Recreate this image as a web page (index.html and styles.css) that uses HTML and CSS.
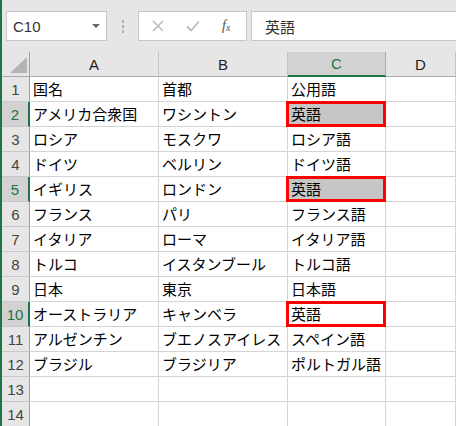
FILE: index.html
```html
<!DOCTYPE html>
<html lang="ja">
<head>
<meta charset="utf-8">
<link rel="stylesheet" href="styles.css">
</head>
<body>
<div class="app">
  <div class="toolbar">
    <div class="namebox"><span class="ref">C10</span><span class="caret"></span></div>
    <div class="grip"><i></i><i></i><i></i></div>
    <div class="fbtns">
      <svg class="ico" width="12" height="12" viewBox="0 0 12 12"><path d="M1 1L11 11M11 1L1 11" stroke="#bcbcbc" stroke-width="1.6" fill="none"/></svg>
      <svg class="ico" width="14" height="12" viewBox="0 0 14 12"><path d="M1 6.5L5 10.5L13 1.5" stroke="#bcbcbc" stroke-width="1.8" fill="none"/></svg>
      <span class="fx">f<sub>x</sub></span>
    </div>
    <div class="finput">英語</div>
  </div>
  <div class="sheet">
    <div class="corner"><span class="tri"></span></div>
    <div class="ch">A</div><div class="ch">B</div><div class="ch sel">C</div><div class="ch">D</div>

    <div class="rh">1</div><div class="c">国名</div><div class="c">首都</div><div class="c">公用語</div><div class="c"></div>
    <div class="rh sel">2</div><div class="c">アメリカ合衆国</div><div class="c">ワシントン</div><div class="c fill mark">英語</div><div class="c"></div>
    <div class="rh">3</div><div class="c">ロシア</div><div class="c">モスクワ</div><div class="c">ロシア語</div><div class="c"></div>
    <div class="rh">4</div><div class="c">ドイツ</div><div class="c">ベルリン</div><div class="c">ドイツ語</div><div class="c"></div>
    <div class="rh sel">5</div><div class="c">イギリス</div><div class="c">ロンドン</div><div class="c fill mark">英語</div><div class="c"></div>
    <div class="rh">6</div><div class="c">フランス</div><div class="c">パリ</div><div class="c">フランス語</div><div class="c"></div>
    <div class="rh">7</div><div class="c">イタリア</div><div class="c">ローマ</div><div class="c">イタリア語</div><div class="c"></div>
    <div class="rh">8</div><div class="c">トルコ</div><div class="c">イスタンブール</div><div class="c">トルコ語</div><div class="c"></div>
    <div class="rh">9</div><div class="c">日本</div><div class="c">東京</div><div class="c">日本語</div><div class="c"></div>
    <div class="rh sel">10</div><div class="c">オーストラリア</div><div class="c">キャンベラ</div><div class="c mark">英語</div><div class="c"></div>
    <div class="rh">11</div><div class="c">アルゼンチン</div><div class="c">ブエノスアイレス</div><div class="c">スペイン語</div><div class="c"></div>
    <div class="rh">12</div><div class="c">ブラジル</div><div class="c">ブラジリア</div><div class="c">ポルトガル語</div><div class="c"></div>
    <div class="rh">13</div><div class="c"></div><div class="c"></div><div class="c"></div><div class="c"></div>
    <div class="rh">14</div><div class="c"></div><div class="c"></div><div class="c"></div><div class="c"></div>
  </div>
</div>
</body>
</html>
```

FILE: styles.css
```css
* { box-sizing: border-box; }
html, body { margin: 0; padding: 0; }
body {
  background: #fff;
  overflow: hidden;
  font-family: "Noto Sans CJK JP", "Noto Sans", sans-serif;
}
.app {
  width: 456px;
  height: 426px;
  border-left: 2px solid #217346;
  overflow: hidden;
}
.toolbar {
  height: 52px;
  background: #e6e6e6;
  display: flex;
  align-items: flex-start;
  padding: 11px 0 0 4px;
}
.namebox {
  width: 101px;
  height: 30px;
  background: #fff;
  border: 1px solid #c6c6c6;
  display: flex;
  align-items: center;
  justify-content: space-between;
  padding: 0 6px 0 6px;
}
.ref {
  font-family: "Liberation Sans", Arial, sans-serif;
  font-size: 15px;
  color: #333;
}
.caret {
  width: 0; height: 0;
  border-left: 4px solid transparent;
  border-right: 4px solid transparent;
  border-top: 4px solid #666;
}
.grip {
  width: 31px;
  height: 30px;
  display: flex;
  flex-direction: column;
  align-items: center;
  justify-content: center;
  gap: 2px;
}
.grip i {
  display: block;
  width: 2px;
  height: 3px;
  background: #b0b0b0;
}
.fbtns {
  width: 109px;
  height: 30px;
  background: #fff;
  border: 1px solid #c6c6c6;
  display: flex;
  align-items: center;
  padding-left: 13px;
  gap: 22px;
}
.fx {
  font-family: "Liberation Serif", serif;
  font-style: italic;
  font-size: 14px;
  color: #555;
}
.fx sub { font-size: 10px; vertical-align: -1px; }
.finput {
  flex: 1;
  height: 30px;
  margin-left: 4px;
  margin-right: -6px;
  background: #fff;
  border: 1px solid #c6c6c6;
  display: flex;
  align-items: center;
  padding-left: 13px;
  font-size: 15px;
  color: #333;
}
.sheet {
  display: grid;
  grid-template-columns: 28px 129px 129px 98px 1fr;
  grid-auto-rows: 25px;
}
.corner {
  background: #e6e6e6;
  border-right: 1px solid #9f9f9f;
  border-bottom: 1px solid #ababab;
  position: relative;
}
.tri {
  position: absolute;
  right: 2px;
  bottom: 3px;
  width: 0; height: 0;
  border-left: 17px solid transparent;
  border-bottom: 16px solid #b4b4b4;
}
.ch {
  background: #e6e6e6;
  border-right: 1px solid #c4c4c4;
  border-bottom: 1px solid #ababab;
  display: flex;
  align-items: center;
  justify-content: center;
  font-family: "Liberation Sans", Arial, sans-serif;
  font-size: 15px;
  color: #222;
}
.ch.sel {
  background: #d2d2d2;
  color: #217346;
  border-right-color: #ababab;
  border-bottom: 2px solid #217346;
}
.rh {
  background: #e6e6e6;
  border-right: 1px solid #9f9f9f;
  border-bottom: 1px solid #c8c8c8;
  display: flex;
  align-items: center;
  justify-content: center;
  font-family: "Liberation Sans", Arial, sans-serif;
  font-size: 15px;
  color: #444;
}
.rh.sel {
  background: #d2d2d2;
  color: #217346;
  border-right: 2px solid #217346;
}
.c {
  border-right: 1px solid #d4d4d4;
  border-bottom: 1px solid #d4d4d4;
  display: flex;
  align-items: center;
  padding: 0 0 2px 3px;
  font-size: 15px;
  color: #000;
  white-space: nowrap;
  position: relative;
}
.c.fill { background: #c6c6c6; }
.c.mark::after {
  content: "";
  position: absolute;
  top: -1px;
  left: -2px;
  right: -1px;
  bottom: -1px;
  border: 3px solid #ff0000;
}
```
